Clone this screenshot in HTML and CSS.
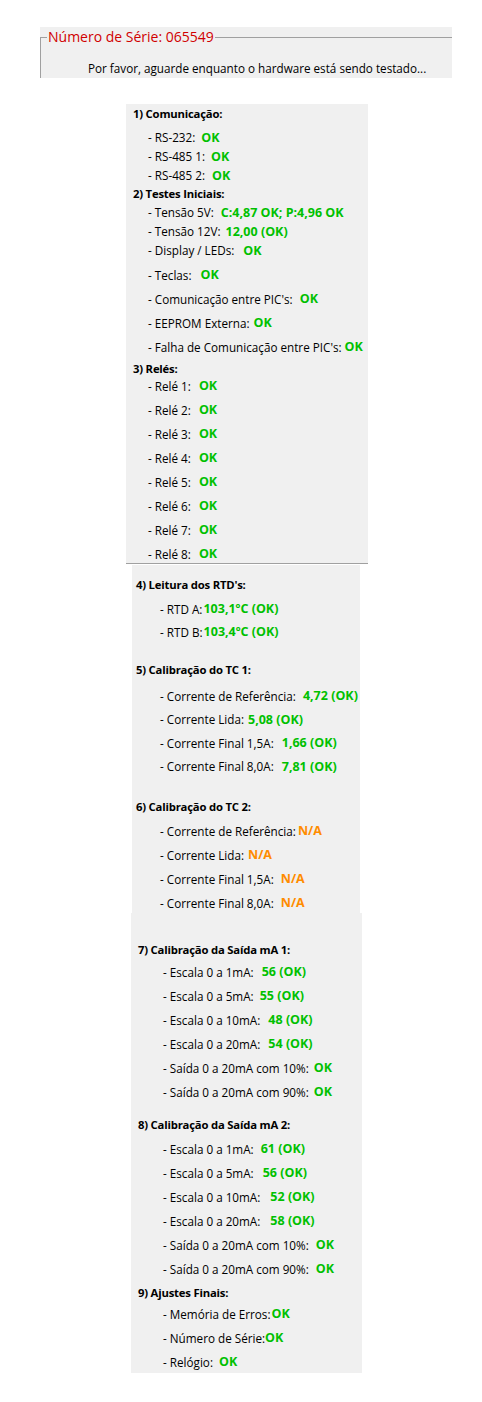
FILE: index.html
```html
<!DOCTYPE html>
<html lang="pt-BR">
<head>
<meta charset="utf-8">
<title>Teste de Hardware</title>
<link rel="stylesheet" href="styles.css">
</head>
<body>
<div class="window">
  <fieldset class="group">
    <legend class="group-title">Número de Série: 065549</legend>
    <p class="status">Por favor, aguarde enquanto o hardware está sendo testado...</p>
  </fieldset>
</div>

<section class="panel p1">
  <div class="hd h19">1) Comunicação:</div>
  <div class="row h19 mt5"><span class="lbl">- RS-232:</span><span class="val g6">OK</span></div>
  <div class="row h19"><span class="lbl">- RS-485 1:</span><span class="val g6">OK</span></div>
  <div class="row h19"><span class="lbl">- RS-485 2:</span><span class="val g7">OK</span></div>
  <div class="hd h18">2) Testes Iniciais:</div>
  <div class="row h19"><span class="lbl">- Tensão 5V:</span><span class="val g7">C:4,87 OK; P:4,96 OK</span></div>
  <div class="row h19"><span class="lbl">- Tensão 12V:</span><span class="val g5">12,00 (OK)</span></div>
  <div class="row h19"><span class="lbl">- Display / LEDs:</span><span class="val g9">OK</span></div>
  <div class="row h24 mt3"><span class="lbl">- Teclas:</span><span class="val g9">OK</span></div>
  <div class="row h24"><span class="lbl">- Comunicação entre PIC's:</span><span class="val g7">OK</span></div>
  <div class="row h24"><span class="lbl">- EEPROM Externa:</span><span class="val g4">OK</span></div>
  <div class="row h24"><span class="lbl">- Falha de Comunicação entre PIC's:</span><span class="val g3">OK</span></div>
  <div class="hd h15">3) Relés:</div>
  <div class="row h24"><span class="lbl">- Relé 1:</span><span class="val g8">OK</span></div>
  <div class="row h24"><span class="lbl">- Relé 2:</span><span class="val g8">OK</span></div>
  <div class="row h24"><span class="lbl">- Relé 3:</span><span class="val g8">OK</span></div>
  <div class="row h24"><span class="lbl">- Relé 4:</span><span class="val g8">OK</span></div>
  <div class="row h24"><span class="lbl">- Relé 5:</span><span class="val g8">OK</span></div>
  <div class="row h24"><span class="lbl">- Relé 6:</span><span class="val g8">OK</span></div>
  <div class="row h24"><span class="lbl">- Relé 7:</span><span class="val g8">OK</span></div>
  <div class="row h24"><span class="lbl">- Relé 8:</span><span class="val g8">OK</span></div>
</section>

<section class="panel p2">
  <div class="hd h24">4) Leitura dos RTD's:</div>
  <div class="row h23"><span class="lbl">- RTD A:</span><span class="val g1">103,1ºC (OK)</span></div>
  <div class="row h23"><span class="lbl">- RTD B:</span><span class="val g1">103,4ºC (OK)</span></div>
  <div class="hd h24 mt15">5) Calibração do TC 1:</div>
  <div class="row h235 mt2"><span class="lbl">- Corrente de Referência:</span><span class="val g7">4,72 (OK)</span></div>
  <div class="row h235"><span class="lbl">- Corrente Lida:</span><span class="val g4">5,08 (OK)</span></div>
  <div class="row h235"><span class="lbl">- Corrente Final 1,5A:</span><span class="val g8">1,66 (OK)</span></div>
  <div class="row h235"><span class="lbl">- Corrente Final 8,0A:</span><span class="val g8">7,81 (OK)</span></div>
  <div class="hd h24 mt17">6) Calibração do TC 2:</div>
  <div class="row h24"><span class="lbl">- Corrente de Referência:</span><span class="val na g2">N/A</span></div>
  <div class="row h24"><span class="lbl">- Corrente Lida:</span><span class="val na g4">N/A</span></div>
  <div class="row h24"><span class="lbl">- Corrente Final 1,5A:</span><span class="val na g7">N/A</span></div>
  <div class="row h24"><span class="lbl">- Corrente Final 8,0A:</span><span class="val na g7">N/A</span></div>
</section>

<section class="panel p3">
  <div class="hd h20">7) Calibração da Saída mA 1:</div>
  <div class="row h24"><span class="lbl">- Escala 0 a 1mA:</span><span class="val g8">56 (OK)</span></div>
  <div class="row h24"><span class="lbl">- Escala 0 a 5mA:</span><span class="val g6">55 (OK)</span></div>
  <div class="row h24"><span class="lbl">- Escala 0 a 10mA:</span><span class="val g8">48 (OK)</span></div>
  <div class="row h24"><span class="lbl">- Escala 0 a 20mA:</span><span class="val g8">54 (OK)</span></div>
  <div class="row h24"><span class="lbl">- Saída 0 a 20mA com 10%:</span><span class="val g5">OK</span></div>
  <div class="row h24"><span class="lbl">- Saída 0 a 20mA com 90%:</span><span class="val g5">OK</span></div>
  <div class="hd h20 mt11">8) Calibração da Saída mA 2:</div>
  <div class="row h24 mt2"><span class="lbl">- Escala 0 a 1mA:</span><span class="val g7">61 (OK)</span></div>
  <div class="row h24"><span class="lbl">- Escala 0 a 5mA:</span><span class="val g9">56 (OK)</span></div>
  <div class="row h24"><span class="lbl">- Escala 0 a 10mA:</span><span class="val g10">52 (OK)</span></div>
  <div class="row h24"><span class="lbl">- Escala 0 a 20mA:</span><span class="val g10">58 (OK)</span></div>
  <div class="row h24"><span class="lbl">- Saída 0 a 20mA com 10%:</span><span class="val g7">OK</span></div>
  <div class="row h24"><span class="lbl">- Saída 0 a 20mA com 90%:</span><span class="val g7">OK</span></div>
  <div class="hd h19 mt2">9) Ajustes Finais:</div>
  <div class="row h24"><span class="lbl">- Memória de Erros:</span><span class="val g1">OK</span></div>
  <div class="row h24"><span class="lbl">- Número de Série:</span><span class="val g0">OK</span></div>
  <div class="row h24"><span class="lbl">- Relógio:</span><span class="val g6">OK</span></div>
</section>
</body>
</html>
```

FILE: styles.css
```css
body {
  margin: 0;
  background: #ffffff;
  color: #000000;
  font-family: "Open Sans", "Liberation Sans", sans-serif;
}

.window {
  margin: 27px 0 0 40px;
  width: 412px;
  height: 51px;
  background: #f0f0f0;
  overflow: hidden;
}

.group {
  margin: 0;
  padding: 0 0 0 6px;
  border: 0;
  border-top: 1px solid #a0a0a0;
  border-left: 1px solid #a0a0a0;
  min-height: 80px;
}

.group-title {
  padding: 0 1px;
  color: #d00000;
  font-size: 14px;
  line-height: 20px;
}

.status {
  margin: 13px 0 0 41px;
  font-size: 11.7px;
  line-height: 16px;
}

.panel {
  background: #f0f0f0;
  box-sizing: border-box;
}

.p1 {
  margin: 26px 0 0 126px;
  width: 242px;
  height: 460px;
  border-bottom: 1px solid #a0a0a0;
}

.p2 {
  margin: 1px 0 0 132px;
  width: 228px;
  height: 348px;
  padding-top: 8px;
}

.p3 {
  margin: 0 0 0 131px;
  width: 231px;
  height: 460px;
  padding-top: 27px;
}

.hd {
  font-weight: 700;
  font-size: 11.3px;
  letter-spacing: -0.2px;
  white-space: nowrap;
}

.row {
  display: flex;
  align-items: center;
  white-space: nowrap;
  font-size: 11.7px;
}

.p1 .hd { padding-left: 7px; }
.p1 .row { padding-left: 22px; }
.p2 .hd { padding-left: 4px; }
.p2 .row { padding-left: 28px; }
.p3 .hd { padding-left: 7px; }
.p3 .row { padding-left: 32px; }

.h15 { height: 15px; line-height: 19px; }
.h18 { height: 18px; line-height: 18px; }
.h19 { height: 19px; line-height: 19px; }
.h20 { height: 20px; line-height: 20px; }
.h23 { height: 23px; }
.h235 { height: 23.5px; }
.h24 { height: 24px; line-height: 24px; }

.mt2 { margin-top: 2px; }
.mt3 { margin-top: 3px; }
.mt5 { margin-top: 5px; }
.mt11 { margin-top: 11px; }
.mt15 { margin-top: 15px; }
.mt17 { margin-top: 17px; }

.val {
  margin-left: 5px;
  color: #00c000;
  font-weight: 700;
  font-size: 12.5px;
}

.val.na { color: #ff8c00; }

.g0 { margin-left: 0; }
.g1 { margin-left: 1px; }
.g2 { margin-left: 2px; }
.g3 { margin-left: 3px; }
.g4 { margin-left: 4px; }
.g5 { margin-left: 5px; }
.g6 { margin-left: 6px; }
.g7 { margin-left: 7px; }
.g8 { margin-left: 8px; }
.g9 { margin-left: 9px; }
.g10 { margin-left: 10px; }
```
